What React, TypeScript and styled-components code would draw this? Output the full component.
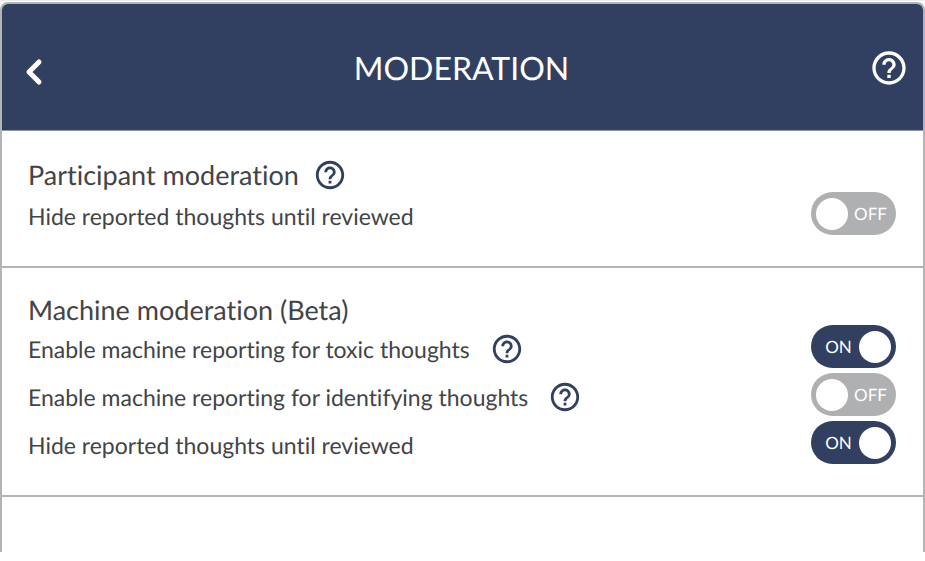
import React, { useId, useState } from "react";
import styled, { createGlobalStyle } from "styled-components";

const navy = "#314060";
const line = "#b3b4b5";

const GlobalStyle = createGlobalStyle`
  *, *::before, *::after { box-sizing: border-box; }
  body {
    margin: 0;
    background: #fff;
    color: #434445;
    font-family: Lato, "Liberation Sans", sans-serif;
    font-variant-ligatures: none;
    text-rendering: geometricPrecision;
  }
`;

const Page = styled.div`
  min-height: 100vh;
  padding-top: 1px;
  padding-bottom: 9px;
  display: flex;
  flex-direction: column;
  border-top: 1px solid #eceded;
`;

const Panel = styled.main`
  flex: 1;
  border: 2px solid ${line};
  border-bottom: 0;
  border-radius: 8px 8px 0 0;
  overflow: hidden;
`;

const Header = styled.header`
  display: grid;
  grid-template-columns: 40px 1fr 40px;
  align-items: center;
  height: 127px;
  padding: 2px 14px 0 12px;
  background: ${navy};
  border-bottom: 1px solid #8f96a5;
  color: #fff;
`;

const Title = styled.h1`
  margin: 0;
  font-size: 32px;
  line-height: 40px;
  font-weight: 400;
  text-align: center;
`;

const IconButton = styled.button`
  display: flex;
  align-items: center;
  justify-content: center;
  flex: none;
  padding: 0;
  border: 0;
  background: none;
  color: inherit;
  cursor: pointer;
`;

const BackButton = styled(IconButton)`
  height: 40px;
  margin-top: 8px;
`;

const Section = styled.section`
  padding: 27px 27px 26px 26px;
  border-bottom: 2px solid ${line};
`;

const SectionHeading = styled.div`
  display: flex;
  align-items: center;
  gap: 14px;
  min-height: 30px;
  color: ${navy};
`;

const HeadingText = styled.h2`
  margin: 0;
  color: #434445;
  font-size: 27px;
  line-height: 30px;
  font-weight: 400;
`;

const Row = styled.div`
  display: flex;
  align-items: flex-start;
  justify-content: space-between;
  height: 48px;
`;

const RowLabel = styled.div`
  display: flex;
  align-items: center;
  gap: 20px;
  height: 48px;
  color: ${navy};
`;

const LabelText = styled.label`
  color: #434445;
  font-size: 23px;
  line-height: 32px;
`;

const Switch = styled.label<{ $on: boolean }>`
  position: relative;
  display: flex;
  flex-direction: ${(p) => (p.$on ? "row-reverse" : "row")};
  align-items: center;
  flex: none;
  width: 85px;
  height: 43px;
  padding: 0 5px;
  border-radius: 22px;
  background: ${(p) => (p.$on ? navy : "#afb0b2")};
  color: #fff;
  cursor: pointer;
`;

const SwitchInput = styled.input`
  position: absolute;
  inset: 0;
  width: 100%;
  height: 100%;
  margin: 0;
  opacity: 0;
  cursor: pointer;
`;

const Knob = styled.span`
  width: 32px;
  height: 32px;
  border-radius: 50%;
  background: #fff;
`;

const SwitchText = styled.span`
  flex: 1;
  padding-left: 2px;
  font-size: 17px;
  line-height: 24px;
  text-align: center;
`;

function HelpButton({ label, size = 34 }: { label: string; size?: number }) {
  return (
    <IconButton type="button" aria-label={label}>
      <svg width={size} height={size} viewBox="0 0 24 24" fill="currentColor" aria-hidden="true">
        <path d="M11 18h2v-2h-2v2zm1-16C6.48 2 2 6.48 2 12s4.480 10 10 10 10-4.480 10-10S17.520 2 12 2zm0 18c-4.410 0-8-3.590-8-8s3.590-8 8-8 8 3.590 8 8-3.590 8-8 8zm0-14c-2.210 0-4 1.790-4 4h2c0-1.100.9-2 2-2s2 .9 2 2c0 2-3 1.750-3 5h2c0-2.250 3-2.500 3-5 0-2.210-1.790-4-4-4z" />
      </svg>
    </IconButton>
  );
}

function SettingRow({ text, help, initial = false }: { text: string; help?: string; initial?: boolean }) {
  const id = useId();
  const [on, setOn] = useState(initial);
  return (
    <Row>
      <RowLabel>
        <LabelText htmlFor={id}>{text}</LabelText>
        {help && <HelpButton label={help} />}
      </RowLabel>
      <Switch $on={on}>
        <SwitchInput
          id={id}
          type="checkbox"
          role="switch"
          checked={on}
          onChange={(e) => setOn(e.target.checked)}
        />
        <Knob />
        <SwitchText>{on ? "ON" : "OFF"}</SwitchText>
      </Switch>
    </Row>
  );
}

export default function App() {
  return (
    <>
      <GlobalStyle />
      <Page>
        <Panel>
          <Header>
            <BackButton type="button" aria-label="Back">
              <svg width="20" height="30" viewBox="0 0 20 30" fill="none" stroke="currentColor" strokeWidth="5" strokeLinecap="round" strokeLinejoin="round" aria-hidden="true">
                <path d="M15 5 5 15l10 10" />
              </svg>
            </BackButton>
            <Title>MODERATION</Title>
            <HelpButton label="Moderation help" size={40} />
          </Header>
          <Section>
            <SectionHeading>
              <HeadingText>Participant moderation</HeadingText>
              <HelpButton label="Participant moderation help" />
            </SectionHeading>
            <SettingRow text="Hide reported thoughts until reviewed" />
          </Section>
          <Section>
            <SectionHeading>
              <HeadingText>Machine moderation (Beta)</HeadingText>
            </SectionHeading>
            <SettingRow text="Enable machine reporting for toxic thoughts" help="Toxic thoughts help" initial />
            <SettingRow text="Enable machine reporting for identifying thoughts" help="Identifying thoughts help" />
            <SettingRow text="Hide reported thoughts until reviewed" initial />
          </Section>
        </Panel>
      </Page>
    </>
  );
}
